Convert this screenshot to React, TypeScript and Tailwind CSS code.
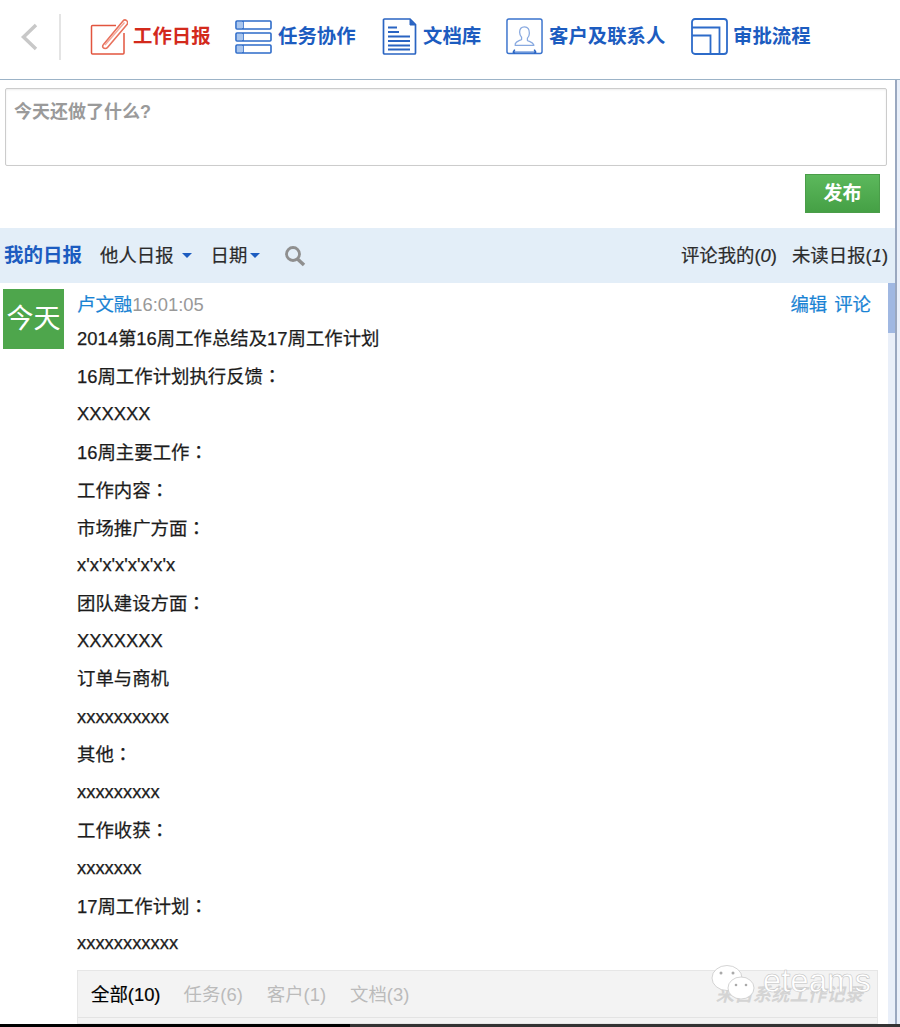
import React from "react";

const FONT = '"Liberation Sans", "Noto Sans CJK SC", sans-serif';

function IconDaily() {
  return (
    <svg width="38" height="38" viewBox="0 0 38 38" fill="none">
      <path d="M26 7.500H2.500a1 1 0 0 0-1 1V35a1 1 0 0 0 1 1H33a1 1 0 0 0 1-1V15" stroke="#e2553f" strokeWidth="1.500" />
      <path d="M13.500 26.500 L33 3 a2.500 2.500 0 0 1 4 3.500 L17.500 29.500 a3 3 0 0 1-4.500 0 a2.600 2.600 0 0 1 .5-3z" stroke="#e8715c" strokeWidth="1.600" fill="#fff" />
      <path d="M15 27 L34.500 4.500" stroke="#f2a79a" strokeWidth="1.400" />
    </svg>
  );
}

function IconTask() {
  return (
    <svg width="37" height="34" viewBox="0 0 37 34" fill="none" stroke="#2d6bc9" strokeWidth="1.600">
      <rect x="1" y="1" width="35" height="8" rx="1" />
      <rect x="1" y="13" width="35" height="8" rx="1" />
      <rect x="1" y="25" width="35" height="8" rx="1" />
      <path d="M8 1v8M8 13v8M8 25v8" />
      <rect x="2" y="2" width="6" height="6" fill="#a9c6ee" stroke="none" />
      <rect x="2" y="14" width="6" height="6" fill="#a9c6ee" stroke="none" />
      <rect x="2" y="26" width="6" height="6" fill="#a9c6ee" stroke="none" />
    </svg>
  );
}

function IconDoc() {
  return (
    <svg width="35" height="37" viewBox="0 0 35 37" fill="none" stroke="#2a64c2">
      <path d="M2.500 1h25.500l5.500 5.500V35a1 1 0 0 1-1 1H2.500a1 1 0 0 1-1-1V2a1 1 0 0 1 1-1z" strokeWidth="1.700" />
      <path d="M28 1.500v5.500h5.500" fill="#2a64c2" strokeWidth="1" />
      <path d="M6 9.500h9M6 14h11M6 18.500h22M6 23h22M6 27.500h22M6 31.500h22" strokeWidth="1.800" />
    </svg>
  );
}

function IconContact() {
  return (
    <svg width="37" height="37" viewBox="0 0 38 38" fill="none">
      <rect x="1" y="1" width="36" height="35.500" rx="2" stroke="#3a73cd" strokeWidth="1.500" />
      <path d="M19 9c-3.600 0-5 2.800-5 5.700 0 2.200 1 4 2 5v2.300c-1.500 1.200-5.500 1.500-6.500 4.500v1.500h19V27.500c-1-3-5-3.300-6.500-4.500v-2.300c1-1 2-2.800 2-5C24 11.800 22.600 9 19 9z" stroke="#88a9e0" strokeWidth="1.300" />
      <path d="M8 35h22" stroke="#3a73cd" strokeWidth="1.200" />
      <path d="M9 32.500l-1.500 2.500 1.500 1.500M29 32.500l1.500 2.500-1.500 1.500" stroke="#2a64c2" strokeWidth="1.600" />
    </svg>
  );
}

function IconFlow() {
  return (
    <svg width="37" height="37" viewBox="0 0 37 37" fill="none" stroke="#2d6bc9" strokeWidth="1.800">
      <rect x="1" y="1" width="35" height="35" rx="3" />
      <path d="M1 9.500h27.500V36" />
      <path d="M1 17.500h18.500V36" />
    </svg>
  );
}

const navItems = [
  { label: "工作日报", icon: <IconDaily />, color: "text-[#d32a1c]", gap: "gap-[5px]", w: "w-[145px]" },
  { label: "任务协作", icon: <IconTask />, color: "text-[#1c5cc0]", gap: "gap-[6px]", w: "w-[147px]" },
  { label: "文档库", icon: <IconDoc />, color: "text-[#1c5cc0]", gap: "gap-[6px]", w: "w-[124px]" },
  { label: "客户及联系人", icon: <IconContact />, color: "text-[#1c5cc0]", gap: "gap-[6px]", w: "w-[185px]" },
  { label: "审批流程", icon: <IconFlow />, color: "text-[#1c5cc0]", gap: "gap-[5px]", w: "w-[125px]" },
];

const lines = [
  "2014第16周工作总结及17周工作计划",
  "16周工作计划执行反馈：",
  "XXXXXX",
  "16周主要工作：",
  "工作内容：",
  "市场推广方面：",
  "x'x'x'x'x'x'x'x",
  "团队建设方面：",
  "XXXXXXX",
  "订单与商机",
  "xxxxxxxxxx",
  "其他：",
  "xxxxxxxxx",
  "工作收获：",
  "xxxxxxx",
  "17周工作计划：",
  "xxxxxxxxxxx",
];

export default function App() {
  return (
    <div className="h-[1027px] w-[900px] overflow-hidden bg-white flex flex-col" style={{ fontFamily: FONT }}>
      {/* top navigation */}
      <header className="h-[80px] shrink-0 border-b border-[#9cb3c7] flex items-center">
        <div className="w-[61px] h-[46px] shrink-0 border-r-2 border-[#e4e4e4] flex items-center pl-[20px] -mt-[5px]">
          <svg width="18" height="28" viewBox="0 0 18 28" fill="none">
            <path d="M16 2 L3.500 14 L16 26" stroke="#c8c8c8" strokeWidth="3.500" />
          </svg>
        </div>
        <nav className="flex items-center pl-[29px] -mt-[6px]">
          {navItems.map((n) => (
            <div key={n.label} className={`flex items-center ${n.gap} ${n.w} shrink-0`}>
              {n.icon}
              <span className={`text-[19.400px] font-bold whitespace-nowrap ${n.color}`}>{n.label}</span>
            </div>
          ))}
        </nav>
      </header>

      <div className="flex-1 min-h-0 flex">
        {/* main column */}
        <main className="w-[895px] shrink-0 flex flex-col min-h-0">
          <div className="pt-[8px] pl-[5px] pr-[8px]">
            <div className="h-[78px] border border-[#cccccc] rounded-[2px] px-[8px] py-[12px] text-[18px] font-bold leading-[22px] text-[#9a9a9a] shadow-[inset_0_1px_2px_rgba(0,0,0,0.08)]">
              今天还做了什么?
            </div>
          </div>
          <div className="flex justify-end pr-[15px] pt-[8px] pb-[15px]">
            <button className="w-[75px] h-[39px] border border-[#4a9d49] bg-gradient-to-b from-[#5cb85c] to-[#45a045] text-white text-[19px] font-bold leading-none">
              发布
            </button>
          </div>

          {/* filter bar */}
          <div className="h-[55px] shrink-0 bg-[#e3eef8] flex items-center pl-[4px] pr-[7px] text-[18.400px] text-[#2b2b2b] [-webkit-text-stroke:0.2px_#2b2b2b]">
            <span className="text-[#1c5cc0] font-bold text-[19.500px] [-webkit-text-stroke:0]">我的日报</span>
            <span className="ml-[18px]">他人日报</span>
            <span className="ml-[8px] border-x-[5px] border-x-transparent border-t-[5px] border-t-[#1c5cc0]" />
            <span className="ml-[19px]">日期</span>
            <span className="ml-[3px] border-x-[5px] border-x-transparent border-t-[5px] border-t-[#1c5cc0]" />
            <svg className="ml-[24px]" width="22" height="22" viewBox="0 0 22 22" fill="none" stroke="#8f8f8f">
              <circle cx="9" cy="9" r="6.500" strokeWidth="2.800" />
              <path d="M13.500 14 L20 20" strokeWidth="3.500" />
            </svg>
            <span className="ml-auto">
              评论我的(<i>0</i>)
            </span>
            <span className="ml-[15px]">
              未读日报(<i>1</i>)
            </span>
          </div>

          {/* feed entry */}
          <div className="flex-1 min-h-0 flex">
            <div className="flex-1 min-w-0 flex pt-[6px] pl-[3px] pr-[10px]">
              <div className="w-[61px] h-[60px] shrink-0 bg-[#4ea64c] text-white text-[27px] flex items-center justify-center leading-none">
                今天
              </div>
              <div className="ml-[13px] flex-1 min-w-0 flex flex-col">
                <div className="flex items-center h-[32px] pr-[7px] text-[18.400px] mt-[1px] text-[#1a83d4] [-webkit-text-stroke:0.2px_#1a83d4]">
                  <span>卢文融</span>
                  <span className="text-[#999999] [-webkit-text-stroke:0]">16:01:05</span>
                  <span className="ml-auto">编辑</span>
                  <span className="ml-[7px]">评论</span>
                </div>
                <div className="mt-[1px] text-[18.400px] leading-[37.800px] text-[#1c1c1c] [-webkit-text-stroke:0.25px_#1c1c1c]">
                  {lines.map((l, i) => (
                    <div key={i} className="h-[37.800px] whitespace-nowrap">
                      {l.endsWith("：") ? (
                        <>
                          {l.slice(0, -1)}
                          <span className="[font-family:'Noto_Sans_CJK_TC',sans-serif]">：</span>
                        </>
                      ) : (
                        l
                      )}
                    </div>
                  ))}
                </div>

                {/* related tabs */}
                <div className="mt-[8px] border border-[#e6e6e6] bg-[#f3f3f3] h-[60px]">
                  <div className="relative h-[47px] flex items-center border-b border-[#e3e3e3] pl-[13px] pt-[1px] text-[18.400px] text-[#bbbbbb]">
                    <span className="text-black [-webkit-text-stroke:0.2px_#000000]">全部(10)</span>
                    <span className="ml-[23px]">任务(6)</span>
                    <span className="ml-[24px]">客户(1)</span>
                    <span className="ml-[24px]">文档(3)</span>
                    <span className="ml-auto mr-[14px] italic font-bold text-[#d4d4d4]">来自系统工作记录</span>
                    {/* watermark over the bar */}
                    <div className="absolute right-[6px] -top-[8px] flex items-center text-white">
                      <svg width="46" height="42" viewBox="0 0 46 40" fill="#ffffff" stroke="#c9c9c9" strokeWidth="0.800">
                        <ellipse cx="16" cy="14" rx="15" ry="12.500" />
                        <ellipse cx="30" cy="24" rx="13" ry="11" />
                        <circle cx="10" cy="9" r="1.500" fill="#aaaaaa" stroke="none" />
                        <circle cx="22" cy="9" r="1.500" fill="#aaaaaa" stroke="none" />
                        <circle cx="25" cy="21" r="1.300" fill="#aaaaaa" stroke="none" />
                        <circle cx="35" cy="21" r="1.300" fill="#aaaaaa" stroke="none" />
                      </svg>
                      <span className="ml-[6px] -mt-[8px] text-[33px] leading-none text-white [-webkit-text-stroke:0.5px_#bdbdbd]">eteams</span>
                    </div>
                  </div>
                </div>
              </div>
            </div>
            {/* scrollbar track and thumb */}
            <div className="w-[7px] shrink-0 bg-[#e9eff9]">
              <div className="h-[50px] bg-[#a0b8e2]" />
            </div>
          </div>
        </main>

        {/* window edge */}
        <div className="w-[5px] shrink-0 border-l-2 border-[#9aa8c0] bg-[#eaf0fa]" />
      </div>

      {/* bottom strip */}
      <div className="h-[3px] shrink-0 flex">
        <div className="w-[350px] bg-black" />
        <div className="flex-1 bg-[#333333]" />
      </div>
    </div>
  );
}
